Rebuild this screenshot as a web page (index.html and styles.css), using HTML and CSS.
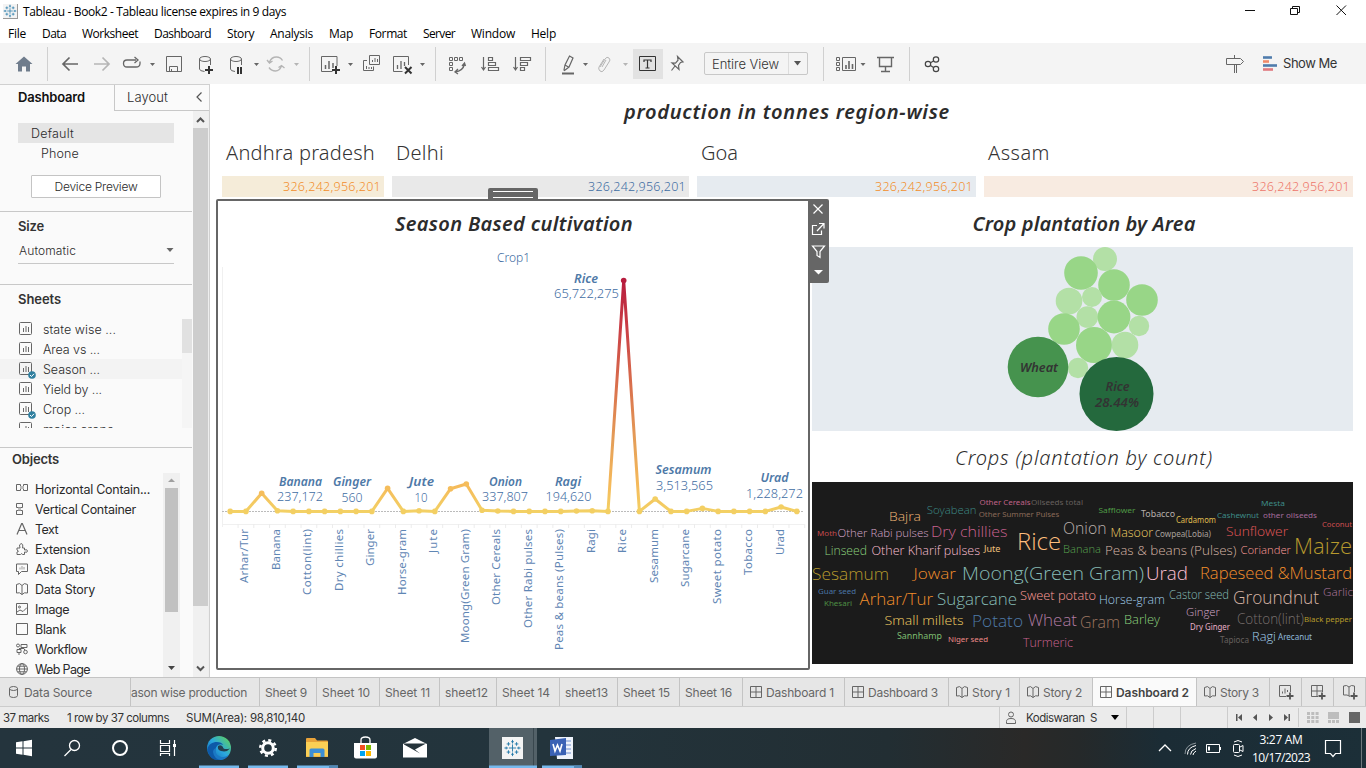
FILE: index.html
```html
<!DOCTYPE html>
<html lang="en">
<head>
<meta charset="utf-8">
<title>Tableau - Book2</title>
<link rel="stylesheet" href="styles.css">
</head>
<body>
<svg width="0" height="0" class="defs">
  <defs>
    <symbol id="sheet" viewBox="0 0 14 14"><rect x=".5" y=".5" width="12" height="12" rx="1" fill="none" stroke="#666"/><path d="M4.500 6v4M7 4v6M9.500 5v5" stroke="#666" fill="none"/></symbol>
    <symbol id="check" viewBox="0 0 8 8"><circle cx="4" cy="4" r="3.800" fill="#2f7f9f"/><path d="M2 4l1.500 1.500L6 2.800" stroke="#fff" fill="none"/></symbol>
    <symbol id="dash" viewBox="0 0 12 12"><path d="M.5.5h11v11H.5zM6 .5v11M.5 6h11" fill="none" stroke="#666"/></symbol>
    <symbol id="book" viewBox="0 0 12 12"><path d="M.5 1.500L3.500.6 6 2.500 8.500.6l3 .9v8.500l-3-.2L6 11.500 3.500 9.800l-3 .2zM6 2.500v9" fill="none" stroke="#666"/></symbol>
    <symbol id="tableau" viewBox="0 0 20 20"><path d="M10 6v8M6 10h8M10 1v4M8.500 3h3M10 15v4M8.500 17h3M1 10h4M3 8.500v3M15 10h4M17 8.500v3M5.500 3.500v4M3.500 5.500h4M14.500 3.500v4M12.500 5.500h4M5.500 12.500v4M3.500 14.500h4M14.500 12.500v4M12.500 14.500h4" fill="none" stroke="#1f77a8" stroke-width="1"/></symbol>
  </defs>
</svg>

<header class="titlebar">
  <span class="app-icon"><svg width="14" height="14"><use href="#tableau"/></svg></span>
  <span class="app-title" data-w="263">Tableau - Book2 - Tableau license expires in 9 days</span>
  <svg class="window-buttons" width="126" height="22" viewBox="1240 0 126 22" fill="none" stroke="#111"><path d="M1245 10.500h10M1290.500 8.500h7v6h-7zM1292.500 8.500v-2h7v6h-2M1336.500 5.500l9.500 9.500M1346 5.500l-9.500 9.500"/></svg>
</header>

<nav class="menubar">
  <span style="width:34px"><i data-w="18">File</i></span><span style="width:40px"><i data-w="24">Data</i></span><span style="width:72px"><i data-w="56">Worksheet</i></span><span style="width:73px"><i data-w="57">Dashboard</i></span><span style="width:43px"><i data-w="27">Story</i></span><span style="width:59px"><i data-w="43">Analysis</i></span><span style="width:40px"><i data-w="24">Map</i></span><span style="width:54px"><i data-w="38">Format</i></span><span style="width:48px"><i data-w="32">Server</i></span><span style="width:60px"><i data-w="44">Window</i></span><span data-w="25">Help</span>
</nav>

<div class="toolbar">
  <svg class="tools" width="435" height="41" viewBox="0 43 435 41" fill="none" stroke="#666">
    <path d="M24 56.500l8.500 7.500h-2.500v7.500h-4v-5h-4v5h-4v-7.500h-2.500z" fill="#6f7c8c" stroke="none"/>
    <path d="M47.500 47v34M309.500 47v34" stroke="#d0d0d0"/>
    <path d="M63 64h15M69.500 57.500L63 64l6.500 6.500" stroke-width="1.700"/>
    <path d="M94 64h15M102.500 57.500L109 64l-6.500 6.500" stroke="#b5b5b5" stroke-width="1.700"/>
    <path d="M136 60h-9q-3.500 0-3.500 3.500t3.500 3.500h9q4 0 4-3.500v-2M134.500 57l3.500 3-3.500 3" stroke-width="1.300"/>
    <path d="M166.500 56.500h15v15h-15zM169.500 71.500v-5h8v5M171.500 71v-2"/>
    <g><ellipse cx="205" cy="59" rx="5.500" ry="2.500"/><path d="M199.500 59v10q0 2 5 2.500M210.500 59v6"/><path d="M209 66v8M205 70h8" stroke="#333" stroke-width="2"/></g>
    <g><ellipse cx="236" cy="59" rx="5.500" ry="2.500"/><path d="M230.500 59v10q0 2 4.500 2.500M241.500 59v6"/><path d="M238 67v7M241 67v7" stroke="#333" stroke-width="2"/></g>
    <path d="M269.500 62q2-5 7-5 4 0 6 3.500M281.500 66q-2 5-6 5-4 0-6.500-3.500M267 60l2.500 3 3-2M284.500 68l-3-2.500-3 2" stroke="#b5b5b5" stroke-width="1.400"/>
    <g fill="#666" stroke="none"><path d="M150 63h5l-2.500 3zM254 63h5l-2.500 3zM348 63h5l-2.500 3zM420 63h5l-2.500 3z"/><path d="M294 63h5l-2.500 3z" fill="#b5b5b5"/></g>
    <path d="M337 66v-9.500h-15.500v15h11"/><path d="M325.500 65v4M329 61v8M333 63v5" stroke-width="1.500"/><path d="M336 66v8M332 70h8" stroke="#333" stroke-width="2"/>
    <path d="M369.500 55.500h10v9h-10zM372.500 62v-2M375 62v-4M377.500 62v-3M367 60.500h-3.500v10h10v-4M366.500 69v-3M369 69v-2M371.500 69v-2"/>
    <path d="M408.500 65v-8.500h-15v15h9" /><path d="M397.500 69v-4M401 69v-8M404.500 66v-4" stroke-width="1.300"/><path d="M405 67l6.500 6.500M411.500 67l-6.500 6.500" stroke="#333" stroke-width="2"/>
  </svg>
  <svg class="tools" width="269" height="41" viewBox="435 43 269 41" fill="none" stroke="#666">
    <path d="M435.500 47v34M545.500 47v34" stroke="#d0d0d0"/>
    <path d="M449.500 57.500h3v3h-3zM454.500 57.500h3v3h-3zM459.500 57.500h3v3h-3zM449.500 62.500h3v3h-3zM449.500 67.500h3v3h-3z"/><path d="M455 72q8-1 9.500-8M458 69l-3 3 3 2M462 66l2.500-3 1 3" stroke-width="1.300"/>
    <path d="M483.500 57v12M481.500 67l2 3 2-3M488.500 57.500h4v3h-4zM488.500 62.500h7v3h-7zM488.500 67.500h10v3h-10z" stroke-width="1.200"/>
    <path d="M515.500 57v12M513.500 67l2 3 2-3M520.500 57.500h10v3h-10zM520.500 62.500h7v3h-7zM520.500 67.500h4v3h-4z" stroke-width="1.200"/>
    <path d="M562 73.500h12" stroke-width="2"/><path d="M569.500 56l3.500 2-4 9-4.500 3.500-.5-.5 1-5zM565 65l3.800 2.200" stroke-width="1.200"/>
    <path d="M600 67l5-8q2-3 4-1t0 4l-5 8q-2 3-4 1t-1-4l5-8M602 67l4-7" stroke="#b5b5b5"/>
    <g fill="#666" stroke="none"><path d="M583 63h5l-2.500 3z"/><path d="M623 63h5l-2.500 3z" fill="#b5b5b5"/></g>
    <rect x="633" y="49" width="30" height="30" fill="#e2e2e2" stroke="none"/>
    <path d="M639.500 56.500h16v14h-16z" stroke="#333"/><path d="M644 62v-2h7v2M647.500 60v8M645.500 68h4" stroke="#333" stroke-width="1.200"/>
    <path d="M677.500 56.500l5.500 5.500-2.500.5-2 3 .5 4-7-6.500 3.500.2 2.500-3zM675 66l-3.500 4.500" stroke-width="1.200"/>
  </svg>
  <div class="view-select"><span data-w="67">Entire View</span><i><svg width="8" height="5"><path d="M0 0h7L3.500 4.500z" fill="#555"/></svg></i></div>
  <svg class="tools" width="140" height="41" viewBox="808 43 140 41" fill="none" stroke="#666">
    <path d="M823.500 47v34M909.500 47v34" stroke="#d0d0d0"/>
    <path d="M836.500 57.500h3v3h-3zM836.500 62.500h3v3h-3zM836.500 67.500h3v3h-3zM842.500 57.500h13v13h-13z"/><path d="M846 69v-4M849 69v-8M852.500 69v-5" stroke-width="1.600"/>
    <path d="M860.500 63h5l-2.500 3z" fill="#666" stroke="none"/>
    <path d="M877 57.500h17M879.500 58v8.500h12V58M885.500 67v4M881 71.500h9" stroke-width="1.400"/>
    <g stroke="#444" stroke-width="1.200"><circle cx="928" cy="64" r="2.700"/><circle cx="936" cy="59.500" r="2.700"/><circle cx="936" cy="69" r="2.700"/><path d="M930.500 62.700l3-1.800M930.500 65.500l3 2"/></g>
  </svg>
  <svg class="tools push" width="60" height="41" viewBox="1223 43 60 41" fill="none" stroke="#666">
    <path d="M1226.500 58.500h14l3 3-3 3h-14zM1234.500 55v3M1234.500 65v8M1236.500 65v8" />
    <g stroke-width="2.600"><path d="M1263 57.500h9" stroke="#4f7cac"/><path d="M1263 61.500h6" stroke="#ef8a6a"/><path d="M1263 65.500h14" stroke="#4f7cac"/><path d="M1263 69.500h10" stroke="#e07a80"/></g>
  </svg>
  <span class="show-me"><i data-w="54">Show Me</i></span>
</div>

<main class="workspace">
  <aside class="sidebar">
    <div class="side-tabs"><b><i data-w="67">Dashboard</i></b><span class="layout-tab"><span data-w="41">Layout</span><svg width="8" height="12"><path d="M6.500 1.500L2 6l4.500 4.500" fill="none" stroke="#555" stroke-width="1.200"/></svg></span></div>
    <div class="side-body">
      <div class="side-panels">
        <section class="devices">
          <div class="device on"><span data-w="43">Default</span></div>
          <div class="device sub"><span data-w="38">Phone</span></div>
          <button class="preview"><span data-w="83">Device Preview</span></button>
        </section>
        <section class="size">
          <h3><i data-w="26">Size</i></h3>
          <div class="combo"><span data-w="57">Automatic</span><svg width="8" height="5"><path d="M.5 0h7L4 4z" fill="#666"/></svg></div>
        </section>
        <section class="sheets">
          <h3><i data-w="43">Sheets</i></h3>
          <div class="sheet-scroller">
            <ul class="sheet-list">
              <li><svg width="14" height="14"><use href="#sheet"/></svg><span data-w="73">state wise ...</span></li>
              <li><svg width="14" height="14"><use href="#sheet"/></svg><span data-w="57">Area vs ...</span></li>
              <li class="on"><svg width="14" height="14"><use href="#sheet"/></svg><svg class="mark" width="8" height="8"><use href="#check"/></svg><span data-w="57">Season ...</span></li>
              <li><svg width="14" height="14"><use href="#sheet"/></svg><span data-w="59">Yield by ...</span></li>
              <li><svg width="14" height="14"><use href="#sheet"/></svg><svg class="mark" width="8" height="8"><use href="#check"/></svg><span data-w="42">Crop ...</span></li>
              <li><svg width="14" height="14"><use href="#sheet"/></svg><span data-w="71">major crops</span></li>
            </ul>
            <div class="mini-track"><div class="mini-thumb"></div></div>
          </div>
        </section>
        <section class="objects">
          <h3><i data-w="47">Objects</i></h3>
          <div class="object-scroller">
            <ul class="object-list">
              <li><svg width="12" height="12" viewBox="0 0 12 12"><path d="M.5 1.500h4v6h-4zM7.500 1.500h4v6h-4z"/><path d="M4 4.500h4" stroke="#bbb" stroke-width="3"/></svg><span data-w="115">Horizontal Contain...</span></li>
              <li><svg width="12" height="12" viewBox="0 0 12 12"><path d="M.5.5h6v4h-6zM.5 7.500h6v4h-6z"/><path d="M2 6h3" stroke="#bbb" stroke-width="3"/></svg><span data-w="101">Vertical Container</span></li>
              <li><svg width="12" height="12" viewBox="0 0 12 12"><path d="M1 11.500L5.700.5h.6L11 11.500M2.700 7.500h6.600" stroke-width="1.200"/></svg><span data-w="23">Text</span></li>
              <li><svg width="12" height="12" viewBox="0 0 12 12"><path d="M1 5h3Q2.500 1 5 .7T6.500 5h2v2q3-1 3 1t-3 1v2.500h-2q-.5-2-2 0H1V9q3-.5 0-2z"/></svg><span data-w="55">Extension</span></li>
              <li><svg width="12" height="12" viewBox="0 0 12 12"><path d="M.5 1h11v7.500h-6l-3 3v-3h-2z"/><path d="M4 6.500V4.500M6 6.500V3M8 6.500V4" stroke="#999"/></svg><span data-w="50">Ask Data</span></li>
              <li><svg width="12" height="12"><use href="#book"/></svg><span data-w="60">Data Story</span></li>
              <li><svg width="12" height="12" viewBox="0 0 12 12"><path d="M.5.5h11v11H.5zM1 9l3-2 3 1.500 4-4"/><circle cx="3.500" cy="4" r="1"/></svg><span data-w="34">Image</span></li>
              <li><svg width="12" height="12" viewBox="0 0 12 12"><path d="M.5.5h11v11H.5z"/></svg><span data-w="31">Blank</span></li>
              <li><svg width="12" height="12" viewBox="0 0 12 12"><circle cx="2" cy="2.500" r="1.500"/><path d="M5 1.500h6v3H5zM1 6.500h4v3H1zM3 5.500h5l1 2M3 10v2"/><circle cx="9.500" cy="9" r="1.800"/></svg><span data-w="52">Workflow</span></li>
              <li><svg width="12" height="12" viewBox="0 0 12 12"><circle cx="6" cy="6" r="5.400"/><ellipse cx="6" cy="6" rx="2.500" ry="5.400"/><path d="M.5 6h11M1.500 3.200h9M1.500 8.800h9"/></svg><span data-w="55">Web Page</span></li>
            </ul>
            <div class="obj-track"><svg width="17" height="15"><path d="M5 9h7L8.500 5.500z" fill="#a0a0a0"/></svg><div class="obj-thumb"></div><svg class="down" width="17" height="14"><path d="M5 5h7L8.500 9z" fill="#444"/></svg></div>
          </div>
        </section>
      </div>
      <div class="side-track"><svg width="15" height="17"><path d="M4 11l3.500-3.500L11 11" fill="none" stroke="#555" stroke-width="2"/></svg><div class="side-thumb"></div><svg class="down" width="15" height="17"><path d="M4 6.500L7.500 10 11 6.500" fill="none" stroke="#555" stroke-width="2"/></svg></div>
    </div>
  </aside>

  <div class="dashboard">
    <h1><span data-w="326">production in tonnes region-wise</span></h1>
    <div class="regions">
      <div class="region r1"><h2><span data-w="149">Andhra pradesh</span></h2><p><span data-w="98">326,242,956,201</span></p></div>
      <div class="region r2"><h2><span data-w="48">Delhi</span></h2><p><span data-w="98">326,242,956,201</span></p></div>
      <div class="region r3"><h2><span data-w="37">Goa</span></h2><p><span data-w="98">326,242,956,201</span></p></div>
      <div class="region r4"><h2><span data-w="62">Assam</span></h2><p><span data-w="98">326,242,956,201</span></p></div>
    </div>
    <div class="views">
      <section class="season">
        <div class="grip"></div>
        <h2><span data-w="238">Season Based cultivation</span></h2>
        <svg id="season-chart" width="590" height="424" viewBox="218 244 590 424"></svg>
        <svg class="view-tools" width="21" height="84" viewBox="808 199 21 84"><path d="M808 199h19q2 0 2 2v80q0 2-2 2h-17q-2 0-2-2z" fill="#666"/><g fill="none" stroke="#fff" stroke-width="1.200"><path d="M813.500 204.500l9 9M822.500 204.500l-9 9M817 225.500h-4.500v9h9v-4M819 223.500h5v5M824 223.500l-7 7.500M812.500 246h12l-4.500 5.500v6l-3-2v-4z"/></g><path d="M814 270h9l-4.500 4.500z" fill="#fff"/></svg>
      </section>
      <div class="right-views">
        <h2><span data-w="223">Crop plantation by Area</span></h2>
        <svg id="bubbles" width="541" height="184" viewBox="812 247 541 184"></svg>
        <h2 class="light"><span data-w="258">Crops (plantation by count)</span></h2>
        <svg id="cloud" width="541" height="182" viewBox="812 482 541 182"></svg>
      </div>
    </div>
  </div>
</main>

<nav class="tabs">
  <div class="source" style="width:131px"><svg width="9" height="12" viewBox="0 0 9 12"><path d="M.5 2.500v7q0 2 4 2t4-2v-7" fill="none" stroke="#666"/><ellipse cx="4.500" cy="2.500" rx="4" ry="2" fill="none" stroke="#666"/></svg><span data-w="68">Data Source</span></div>
  <div class="cut" style="width:129px"><span data-w="116">ason wise production</span></div>
  <div style="width:57px"><span data-w="42">Sheet 9</span></div>
  <div style="width:63px"><span data-w="48">Sheet 10</span></div>
  <div style="width:60px"><span data-w="45">Sheet 11</span></div>
  <div style="width:57px"><span data-w="43">sheet12</span></div>
  <div style="width:63px"><span data-w="48">Sheet 14</span></div>
  <div style="width:58px"><span data-w="43">sheet13</span></div>
  <div style="width:62px"><span data-w="47">Sheet 15</span></div>
  <div style="width:63px"><span data-w="47">Sheet 16</span></div>
  <div class="ic" style="width:102px"><svg width="12" height="12"><use href="#dash"/></svg><span data-w="68">Dashboard 1</span></div>
  <div class="ic" style="width:104px"><svg width="12" height="12"><use href="#dash"/></svg><span data-w="70">Dashboard 3</span></div>
  <div class="ic" style="width:71px"><svg width="12" height="12"><use href="#book"/></svg><span data-w="38">Story 1</span></div>
  <div class="ic" style="width:73px"><svg width="12" height="12"><use href="#book"/></svg><span data-w="39">Story 2</span></div>
  <div class="ic active" style="width:104px"><svg width="12" height="12"><use href="#dash"/></svg><span data-w="73">Dashboard 2</span></div>
  <div class="ic" style="width:73px"><svg width="12" height="12"><use href="#book"/></svg><span data-w="39">Story 3</span></div>
  <div class="add"><svg width="16" height="16" viewBox="0 0 16 16"><path d="M8 12.500H1.500v-11h11V8M4.500 9.500v-2M7 9.500v-5M9.500 8V6" fill="none" stroke="#666"/><path d="M12 8.500v7M8.500 12h7" stroke="#555" stroke-width="1.800"/></svg></div>
  <div class="add"><svg width="16" height="16" viewBox="0 0 16 16"><path d="M8 12.500H1.500v-11h11V8M7 1.500v11M1.500 7h11" fill="none" stroke="#666"/><path d="M12 8.500v7M8.500 12h7" stroke="#555" stroke-width="1.800"/></svg></div>
  <div class="add"><svg width="16" height="16" viewBox="0 0 16 16"><path d="M8 12.500L5 11H1.500V2l3-.5L7 3l2.500-1.500 3 .5v6M7 3v9" fill="none" stroke="#666"/><path d="M12 8.500v7M8.500 12h7" stroke="#555" stroke-width="1.800"/></svg></div>
</nav>

<footer class="status">
  <span class="st" style="width:64px"><i data-w="46">37 marks</i></span><span class="st" style="width:119px"><i data-w="102">1 row by 37 columns</i></span><span class="st"><i data-w="119">SUM(Area): 98,810,140</i></span>
  <div class="user"><svg width="10" height="14" viewBox="0 0 10 14" fill="none" stroke="#666"><circle cx="5" cy="3.500" r="2.500"/><path d="M.5 12.500v-2q0-3 4.500-3t4.500 3v2z"/></svg><span data-w="71">Kodiswaran&nbsp; S</span><svg class="caret" width="8" height="5"><path d="M0 0h8L4 5z"/></svg></div>
  <div class="cell c27"></div><div class="cell c27"></div><div class="cell c47"></div>
  <svg class="pager" width="138" height="21" viewBox="1228 707 138 21"><path d="M1298.500 708v19" stroke="#ccc"/><g fill="#555"><path d="M1236 714h1.500v7h-1.500zM1242 714v7l-4-3.500zM1257 714v7l-4-3.500zM1269 714v7l4-3.500zM1284 714v7l4-3.500zM1288.500 714h1.500v7h-1.500z"/><path d="M1307 712h3v3h-3zM1311.300 712h3v3h-3zM1315.600 712h3v3h-3zM1307 716h3v3h-3zM1311.300 716h3v3h-3zM1315.600 716h3v3h-3zM1307 720h3v3h-3zM1311.300 720h3v3h-3zM1315.600 720h3v3h-3zM1328 712h11v7h-11zM1328 720h3v3h-3zM1332 720h3v3h-3zM1336 720h3v3h-3z" fill="#bdbdbd"/><path d="M1349 712h11v11h-11z" fill="#666"/></g></svg>
</footer>

<footer class="taskbar">
  <svg width="600" height="40" viewBox="0 728 600 40">
    <defs><linearGradient id="edge1" x1="0" y1="1" x2="1" y2="0"><stop offset="0" stop-color="#0c59a4"/><stop offset=".5" stop-color="#2aa7e0"/><stop offset="1" stop-color="#66d84a"/></linearGradient></defs>
    <path d="M16 742.300l6.500-1v6.200H16zM23.500 741.200l8.500-1.400v7.700h-8.500zM16 748.500h6.500v6.200l-6.500-1zM23.500 748.500h8.500v7.700l-8.500-1.400z" fill="#fff"/>
    <g fill="none" stroke="#fff"><circle cx="74.500" cy="745.500" r="5" stroke-width="1.300"/><path d="M71 749.500l-6.500 6.500" stroke-width="1.300"/><circle cx="120" cy="748" r="7" stroke-width="2"/><path d="M160.500 740v3.500h9V740M160.500 756v-2.500h9v2.500M160.500 745.500h9v6h-9zM174.500 740v16" stroke-width="1.200"/><path d="M173 745.500h3" stroke-width="3"/></g>
    <circle cx="219" cy="748" r="12" fill="url(#edge1)"/><path d="M207.300 750q1-7 8-8 6-.5 8 3-5-2-7 2-3 6 2 10 2 1.500 4 2.500-12 3-15-9.500z" fill="#0d59a8"/><path d="M216 748q-2 6 4 8.500 5 1.500 8.500-1.500-2 4-7.500 5-7-1-8-8 0-3 3-4z" fill="#1b78c4"/><path d="M218 746q3-2 5 1 0 3 7 1.500-3 4-9 2.500-4-1-3-5z" fill="#24404f"/>
    <circle cx="268" cy="748" r="5.300" fill="none" stroke="#fff" stroke-width="3"/><circle cx="268" cy="748" r="7.700" fill="none" stroke="#fff" stroke-width="2.600" stroke-dasharray="3 3.050"/>
    <path d="M306 739q0-1 1-1h8l2 2.500h10q1 0 1 1V757h-22z" fill="#e8a33a"/><path d="M306 742h22v14.500h-22z" fill="#fbcf55"/><path d="M309.500 757v-7q0-1.500 1.500-1.500h12q1.500 0 1.500 1.500v7h-4v-4h-7v4z" fill="#3d8fd6"/>
    <path d="M354 743h23v13.500q0 2-2 2h-19q-2 0-2-2z" fill="#fff"/><path d="M361 743v-3q0-3 4.500-3t4.500 3v3" fill="none" stroke="#fff" stroke-width="1.300"/><path d="M360 745h5v5h-5z" fill="#f25022"/><path d="M366 745h5v5h-5z" fill="#7fba00"/><path d="M360 751h5v5h-5z" fill="#00a4ef"/><path d="M366 751h5v5h-5z" fill="#ffb900"/>
    <path d="M403 744l12-6 12 6v13.500h-24z" fill="#fff"/><path d="M404 743.500h22l-11 6 5 4-16-9z" fill="#26343b"/>
    <rect x="489" y="728" width="48" height="40" fill="#536168"/><path d="M533.500 728v40" stroke="#39474e"/><rect x="502" y="737" width="21" height="22" fill="#f4f4f4"/><use href="#tableau" x="503.500" y="739" width="18" height="18"/>
    <path d="M555 737h18v22h-16z" fill="#eef3fb"/><path d="M560 741h11M561 745h10M561 749h10M561 753h10" stroke="#6e8fd0"/><path d="M550 740l16-2v17l-16 1z" fill="#3a62b5"/><path d="M553 744l2 7 2.500-6 2.500 6 2-7" fill="none" stroke="#fff" stroke-width="1.600"/>
    <path d="M199 765.500h40v2.500h-40zM248 765.500h40v2.500h-40zM297 765.500h41v2.500h-41zM489 765.500h48v2.500h-48zM542 765.500h40v2.500h-40z" fill="#76b9ed"/><path d="M329 765.500h9v2.500h-9zM574 765.500h8v2.500h-8z" fill="#5288b5"/>
  </svg>
  <svg class="tray" width="96" height="40" viewBox="1155 728 96 40" fill="none" stroke="#fff">
    <path d="M1159 751l6-6 6 6" stroke-width="1.300"/><path d="M1185 754q0-9 11-11" stroke="#8a949a"/><path d="M1187.500 754.500q0-7 8.500-9M1190.500 754.500q0-4 5.500-6M1193 755q0-2 3-4"/><path d="M1206.500 744.500h13v8h-13zM1220.500 747v3"/><path d="M1209 746.500v4" stroke-width="2"/><rect x="1233.500" y="744.500" width="6" height="8" rx="1"/><path d="M1240 747l3-1.500v6l-3-1.500M1234 742q4-3 8 0M1234 755q4 3 8 0"/>
  </svg>
  <div class="clock"><span data-w="43">3:27 AM</span><span data-w="58">10/17/2023</span></div>
  <svg width="55" height="40" viewBox="1311 728 55 40" fill="none" stroke="#fff"><path d="M1325.500 740.500h15v13h-5l-2.500 3-2.500-3h-5z" stroke-width="1.200"/><path d="M1361.500 728v40" stroke="#6d787d"/></svg>
</footer>
<script src="app.js"></script>
</body>
</html>
```
FILE: styles.css
```css
* { box-sizing: border-box; margin: 0; padding: 0; }
body { width: 1366px; height: 768px; overflow: hidden; display: flex; flex-direction: column; background: #fff; font-family: "Open Sans", "Noto Sans", sans-serif; font-size: 12px; color: #000; }
.defs { position: absolute; }
svg { display: block; flex: none; }
i { font-style: normal; }
ul { list-style: none; }
span, i, b, h3 { white-space: pre; }
[data-w] { display: inline-block; }

.titlebar { height: 22px; flex: none; display: flex; align-items: center; padding-left: 3px; }
.app-icon { width: 15px; height: 15px; background: #f3f3f3; border-right: 1px solid #999; border-bottom: 1px solid #999; margin-right: 5px; margin-top: 1px; }
.app-title { padding-top: 1px; }
.window-buttons { margin-left: auto; }
.menubar { height: 21px; flex: none; display: flex; padding-left: 8px; line-height: 23px; }
.menubar span { flex: none; }

.toolbar { height: 41px; flex: none; display: flex; align-items: center; background: #f4f4f4; font-family: Inter, sans-serif; font-weight: 400; color: #333; }
.view-select { width: 104px; height: 23px; border: 1px solid #c8c8c8; border-radius: 2px; display: flex; align-items: center; justify-content: space-between; padding-left: 7px; font-size: 13px; font-weight: 300; color: #333; }
.view-select i { width: 19px; height: 21px; border-left: 1px solid #ddd; display: flex; align-items: center; justify-content: center; }
.push { margin-left: auto; }
.show-me { width: 83px; font-size: 13px; padding-bottom: 1px; }

.workspace { flex: 1; min-height: 0; display: flex; }
.sidebar { width: 210px; flex: none; display: flex; flex-direction: column; background: #fafafa; border-top: 1px solid #d0d0d0; border-right: 1px solid #d0d0d0; font-family: Inter, sans-serif; font-weight: 300; font-size: 12.5px; color: #2a2a2a; }
.side-tabs { height: 26px; flex: none; display: flex; align-items: center; padding-left: 18px; font-size: 13px; }
.side-tabs b { width: 96px; font-weight: 600; color: #111; padding-bottom: 2px; }
.layout-tab { flex: 1; height: 26px; border-left: 1px solid #c8c8c8; border-bottom: 1px solid #c8c8c8; display: flex; align-items: center; justify-content: space-between; padding: 0 6px 1px 12px; }
.side-body { flex: 1; min-height: 0; display: flex; justify-content: space-between; }
.side-panels { width: 192px; display: flex; flex-direction: column; overflow: hidden; }
.side-panels h3 { font-size: 13px; font-weight: 600; color: #333; line-height: 16px; }
.devices { height: 101px; flex: none; padding: 12px 18px 0; border-bottom: 1px solid #c8c8c8; }
.device { height: 20px; line-height: 21px; padding-left: 13px; }
.device.on { background: #e5e5e5; }
.device.sub { padding-left: 23px; }
.preview { display: block; width: 130px; height: 23px; margin: 12px 0 0 13px; padding-bottom: 1px; background: #fff; border: 1px solid #c4c4c4; border-radius: 1px; font: 300 12px Inter, sans-serif; color: #2a2a2a; }
.size { height: 73px; flex: none; padding: 6px 18px 0; border-bottom: 1px solid #c8c8c8; }
.combo { height: 24px; margin-top: 6px; padding-left: 1px; display: flex; align-items: center; justify-content: space-between; border-bottom: 1px solid #c8c8c8; font-size: 12px; padding-bottom: 2px; }
.sheets { height: 163px; flex: none; padding: 6px 0 0; border-bottom: 1px solid #c8c8c8; }
.sheets h3 { margin-left: 18px; }
.sheet-scroller { height: 109px; margin-top: 12px; display: flex; overflow: hidden; }
.sheet-list { width: 182px; }
.sheet-list li { position: relative; height: 20px; display: flex; align-items: center; padding-left: 19px; gap: 10px; }
.sheet-list li > svg:first-child { margin-top: -1px; }
.sheet-list li.on { background: #f3f3f3; }
.mark { position: absolute; left: 28px; top: 12px; }
.mini-track { width: 10px; background: #f5f5f5; }
.mini-thumb { height: 34px; background: #e1e1e1; }
.objects { flex: 1; min-height: 0; padding-top: 3px; display: flex; flex-direction: column; }
.objects h3 { margin-left: 12px; flex: none; }
.object-scroller { flex: 1; min-height: 0; display: flex; margin-top: 6px; }
.object-list { width: 163px; padding-top: 6px; font-weight: 400; }
.object-list li { height: 20px; display: flex; align-items: center; padding-left: 16px; gap: 7px; }
.object-list svg { fill: none; stroke: #666; }
.obj-track { width: 17px; background: #f0f0f0; display: flex; flex-direction: column; align-items: center; padding-bottom: 2px; }
.obj-thumb { width: 13px; height: 124px; background: #c1c1c1; }
.down { margin-top: auto; }
.side-track { width: 16px; background: #f0f0f0; display: flex; flex-direction: column; border-right: 1px solid #eee; }
.side-thumb { height: 478px; width: 15px; background: #cdcdcd; }

.dashboard { flex: 1; min-width: 0; display: flex; flex-direction: column; font-family: "Open Sans", sans-serif; color: #333; }
.dashboard h1, .season h2, .right-views h2 { font-family: "Noto Sans", "Open Sans", sans-serif; font-size: 20px; font-style: italic; font-weight: 600; text-align: center; color: #2c2c2c; }
.dashboard h1 { height: 54px; line-height: 55px; padding-right: 2px; }
.regions { display: flex; gap: 8px; padding-left: 12px; height: 61px; flex: none; }
.region h2 { height: 38px; line-height: 29px; font-family: "Noto Sans", "Open Sans", sans-serif; font-size: 20px; font-weight: 300; padding-left: 4px; }
.region p { height: 21px; line-height: 21px; text-align: right; padding-right: 3px; font-family: "Noto Sans", "Open Sans", sans-serif; font-size: 12.5px; font-weight: 300; }
.r1 { width: 162px; } .r1 p { background: #f5ecd9; color: #f28e2b; }
.r2 { width: 297px; } .r2 p { background: #e9e9e9; color: #3f6da3; }
.r3 { width: 279px; } .r3 p { background: #e6ebf0; color: #f28e2b; }
.r4 { width: 369px; } .r4 p { background: #f8ebe1; color: #ee756a; }
.views { display: flex; padding-left: 6px; flex: 1; min-height: 0; }
.season { position: relative; width: 594px; height: 471px; border: 2px solid #666; border-radius: 2px; margin-right: 2px; }
.season h2 { height: 43px; line-height: 46px; padding-left: 2px; }
.grip { position: absolute; left: 270px; top: -13px; width: 50px; height: 12px; background: #666; border-radius: 2px 2px 0 0; }
.grip::before { content: ""; position: absolute; left: 5px; right: 5px; top: 3px; height: 5px; border: solid #fff; border-width: 1px 0; }
.view-tools { position: absolute; left: 590px; top: -2px; z-index: 2; }
.right-views { width: 541px; }
.right-views h2 { height: 48px; line-height: 50px; padding-left: 3px; }
.right-views h2.light { height: 51px; line-height: 54px; font-weight: 300; }

.tabs { height: 30px; flex: none; display: flex; background: #e6e6e6; border-top: 1px solid #c4c4c4; border-bottom: 1px solid #ccc; font-family: Inter, sans-serif; font-size: 12px; font-weight: 400; color: #666; }
.tabs > div { flex: none; display: flex; align-items: center; border-right: 1px solid #c4c4c4; padding-left: 5px; }
.tabs .source { padding-left: 9px; gap: 6px; }
.tabs .cut { padding-left: 0; }
.tabs .ic { padding-left: 7px; gap: 4px; }
.tabs .active { background: #fafafa; font-weight: 600; color: #444; }
.tabs .add { width: 32px; padding-left: 8px; }
.status { height: 21px; flex: none; display: flex; align-items: center; background: #ebebeb; padding-left: 3px; font-family: Inter, sans-serif; font-size: 11.5px; color: #333; }
.user { margin-left: auto; width: 128px; height: 21px; display: flex; align-items: center; border: solid #ccc; border-width: 0 1px; padding-left: 6px; gap: 10px; }
.caret { margin-left: 4px; }
.cell { height: 21px; border-right: 1px solid #ccc; }
.c27 { width: 27px; }
.c47 { width: 47px; }
.taskbar { height: 40px; flex: none; display: flex; background: linear-gradient(90deg, #24343d, #23343c 40%, #222e33 65%, #2a2928 75%, #25292a 79%, #1b2c35 85%, #1c2f38); color: #fff; }
.tray { margin-left: auto; }
.clock { width: 60px; display: flex; flex-direction: column; align-items: center; justify-content: center; line-height: 18px; padding-top: 1px; font-size: 12px; }
```
FILE: app.js
```javascript
// Sets the tracking of a label so that it fills its slot width.
document.querySelectorAll('[data-w]').forEach(el => {
  const range = document.createRange();
  range.selectNodeContents(el);
  const natural = range.getBoundingClientRect().width;
  const spacing = (Number(el.dataset.w) - natural) / el.textContent.length;
  el.style.letterSpacing = spacing.toFixed(3) + 'px';
});

const NS = 'http://www.w3.org/2000/svg';
function add(parent, tag, attrs, text) {
  const el = document.createElementNS(NS, tag);
  for (const k in attrs) el.setAttribute(k, attrs[k]);
  if (text) el.textContent = text;
  parent.appendChild(el);
  return el;
}
const FONT = '"Noto Sans", "Open Sans", sans-serif';
const LIGHT = '"Open Sans", "Noto Sans", sans-serif';

// Season chart
const chart = document.getElementById('season-chart');
const grad = add(add(chart, 'defs', {}), 'linearGradient', { id: 'heat', gradientUnits: 'userSpaceOnUse', x1: 0, y1: 512, x2: 0, y2: 280 });
[[0, '#f3d165'], [0.12, '#f5b95a'], [0.3, '#e59f58'], [0.55, '#d96f4c'], [0.8, '#c93d45'], [1, '#b71d3e']]
  .forEach(([o, c]) => add(grad, 'stop', { offset: o, 'stop-color': c }));
const STEP = 15.74, X0 = 230.2;
const ys = Array(37).fill(511.4);
Object.assign(ys, { 2: 493.3, 3: 510.7, 10: 488.3, 12: 510.8, 14: 488.7, 15: 484, 16: 510.2, 17: 511, 22: 511, 23: 510.8, 25: 280.5, 27: 499, 30: 508.4, 35: 507 });
add(chart, 'path', { d: 'M222.500 267V527M222 524.500H804', stroke: '#f0f0f0', fill: 'none' });
for (let i = 0; i < 37; i++) add(chart, 'path', { d: `M${X0 + (i + 0.5) * STEP} 524v4`, stroke: '#ececec' });
add(chart, 'path', { d: 'M222 511.500H804', stroke: '#bbb', 'stroke-dasharray': '2 1' });
add(chart, 'path', { d: 'M' + ys.map((y, i) => `${(X0 + i * STEP).toFixed(1)} ${y}`).join('L'), fill: 'none', stroke: 'url(#heat)', 'stroke-width': 3, 'stroke-linejoin': 'round' });
ys.forEach((y, i) => add(chart, 'circle', { cx: X0 + i * STEP, cy: y, r: 2.8, fill: y < 300 ? '#b71d3e' : y < 495 ? '#f5bd5b' : '#f3cf63' }));

[['Arhar/Tur', 54], ['Banana', 41], ['Cotton(lint)', 66], ['Dry chillies', 62], ['Ginger', 37], ['Horse-gram', 66], ['Jute', 24], ['Moong(Green Gram)', 114], ['Other Cereals', 76], ['Other Rabi pulses', 99], ['Peas & beans (Pulses)', 121], ['Ragi', 24], ['Rice', 24], ['Sesamum', 54], ['Sugarcane', 58], ['Sweet potato', 75], ['Tobacco', 46], ['Urad', 26]]
  .forEach(([t, w], i) => {
    const x = X0 + (2 * i + 1) * STEP + 2.5;
    add(chart, 'text', { transform: `translate(${x} ${529 + w}) rotate(-90)`, textLength: w, 'font-family': FONT, 'font-size': 11.5, fill: '#5f86b4' }, t);
  });

function label(name, cx, y, w, value, vcx, vw) {
  add(chart, 'text', { x: cx - w / 2, y, textLength: w, lengthAdjust: 'spacingAndGlyphs', 'font-family': FONT, 'font-size': 12.5, 'font-weight': 600, 'font-style': 'italic', fill: '#4e79a7' }, name);
  add(chart, 'text', { x: vcx - vw / 2, y: y + 15.5, textLength: vw, lengthAdjust: 'spacingAndGlyphs', 'font-family': FONT, 'font-size': 12.5, 'font-weight': 300, fill: '#3f6da3' }, value);
}
label('Banana', 300.5, 485.5, 43, '237,172', 300, 46);
label('Ginger', 352, 486, 38, '560', 352, 21);
label('Jute', 421.5, 486, 25, '10', 421, 13);
label('Onion', 505.5, 485.5, 33, '337,807', 505, 46);
label('Ragi', 568, 485.5, 26, '194,620', 568.5, 46);
label('Sesamum', 683.5, 474, 56, '3,513,565', 684.5, 57);
label('Urad', 774.5, 482, 28, '1,228,272', 774.5, 57);
label('Rice', 586, 282.5, 24, '65,722,275', 586.5, 65);
add(chart, 'text', { x: 497, y: 262, textLength: 33, 'font-family': FONT, 'font-size': 12, 'font-weight': 300, fill: '#3f6da3' }, 'Crop1');

// Packed bubbles
const bubbles = document.getElementById('bubbles');
add(bubbles, 'rect', { x: 812, y: 247, width: 541, height: 184, fill: '#e6ebf0' });
[[1105, 259, 12, 1], [1081, 273, 16.8, 2], [1114, 285, 15.8, 2], [1142, 300, 15.8, 2], [1069, 301, 13.3, 1], [1092, 297, 10, 1], [1087.3, 317, 10.8, 1], [1114, 317, 16.4, 2], [1064, 329, 15.8, 2], [1139, 326, 10.2, 1], [1094, 345, 18, 2], [1125, 345, 13.3, 1], [1078, 368, 10.2, 1], [1038, 367, 30.3, 3], [1116.5, 394, 37, 4]]
  .forEach(([cx, cy, r, c]) => add(bubbles, 'circle', { cx, cy, r, fill: ['', '#b3e0a6', '#98d687', '#46934e', '#24693d'][c] }));
[['Wheat', 1020, 372, 38], ['Rice', 1105.5, 391, 24], ['28.44%', 1095, 407, 44]]
  .forEach(([t, x, y, w]) => add(bubbles, 'text', { x, y, textLength: w, lengthAdjust: 'spacingAndGlyphs', 'font-family': FONT, 'font-size': 12.5, 'font-weight': 600, 'font-style': 'italic', fill: '#333' }, t));

// Word cloud: text, left, right, baseline, size, colour
const cloud = document.getElementById('cloud');
add(cloud, 'rect', { x: 812, y: 482, width: 541, height: 182, fill: '#1b1b1b' });
[
  ['Bajra', 889, 921, 520.5, 13, '#f1b576'], ['Soyabean', 926.7, 976.5, 514, 11, '#3d8a86'],
  ['Other Cereals', 979.5, 1030.5, 505, 7.5, '#c06287'], ['Oilseeds total', 1031, 1083, 505, 7.5, '#66605e'],
  ['Other Summer Pulses', 978.7, 1059.3, 517, 7.5, '#8a6a58'], ['Moth', 817, 837, 536, 7.5, '#c24a4d'],
  ['Other Rabi pulses', 837.5, 928.5, 537, 11.5, '#d4a6c8'], ['Dry chillies', 931, 1007.5, 537, 15, '#c96290'],
  ['Rice', 1017, 1061, 550, 23, '#ffbe7d'], ['Onion', 1063, 1106.5, 533.5, 16, '#bab0ac'],
  ['Masoor', 1110.5, 1153, 537, 12.5, '#f1ce63'], ['Linseed', 824.5, 867, 555, 12, '#8cd17d'],
  ['Other Kharif pulses', 871.5, 980, 555, 12, '#fabfd2'], ['Jute', 984, 1000.5, 552, 8, '#f1c07b'],
  ['Banana', 1063, 1101, 553, 11, '#59a14f'], ['Peas & beans (Pulses)', 1105, 1236.5, 555, 13, '#d7b5a6'],
  ['Coriander', 1240.5, 1291, 554, 11, '#ff9d9a'], ['Maize', 1294, 1352, 554, 22, '#b6992d'],
  ['Sesamum', 812, 889, 580, 17, '#b6992d'], ['Jowar', 913.5, 956, 579, 15, '#f28e2b'],
  ['Moong(Green Gram)', 962, 1144, 580, 19, '#86bcb6'], ['Urad', 1146, 1188, 580, 18.5, '#fabfd2'],
  ['Rapeseed &Mustard', 1200, 1352, 579, 16.5, '#f28e2b'], ['Guar seed', 818, 856, 594, 7.5, '#4a74a4'],
  ['Khesari', 824, 852, 606, 7.5, '#4e8f45'], ['Arhar/Tur', 859.5, 933, 605, 17, '#f28e2b'],
  ['Sugarcane', 937, 1017, 604.5, 17, '#86bcb6'], ['Sweet potato', 1020, 1096, 600, 12, '#ff9d9a'],
  ['Horse-gram', 1099, 1165, 603.5, 12, '#a0cbe8'], ['Castor seed', 1169, 1229, 599, 12, '#86bcb6'],
  ['Groundnut', 1233, 1319, 604, 18, '#d7b5a6'], ['Garlic', 1323, 1353, 596, 11, '#b07aa1'],
  ['Small millets', 884.5, 963.5, 625, 13.5, '#f1ce63'], ['Potato', 972, 1023, 627, 17, '#4e79a7'],
  ['Wheat', 1028, 1077, 625.5, 17, '#b07aa1'], ['Gram', 1080, 1120, 628, 17, '#9d7660'],
  ['Barley', 1124, 1160, 624, 12.5, '#8cd17d'], ['Ginger', 1186, 1220, 616, 11.5, '#d4a6c8'],
  ['Cotton(lint)', 1237, 1304, 623.5, 14, '#79706e'], ['Black pepper', 1304, 1352, 622, 7.5, '#b59a2a'],
  ['Sannhamp', 897, 942, 639, 9, '#7dbb70'], ['Niger seed', 948, 988, 642, 7.5, '#ee8a88'],
  ['Turmeric', 1023, 1073, 647, 12, '#c96290'], ['Dry Ginger', 1190, 1230, 630, 8, '#e8b0c8'],
  ['Tapioca', 1220, 1249, 643, 8, '#66605e'], ['Ragi', 1252, 1276, 641, 13, '#a0cbe8'],
  ['Arecanut', 1278, 1312, 640, 8, '#8fbadb'], ['Safflower', 1098.5, 1135.5, 513, 7.5, '#4e9a45'],
  ['Tobacco', 1141, 1175, 517, 8.5, '#b8b0ac'], ['Cardamom', 1176, 1216, 523, 8, '#e0bf50'],
  ['Cashewnut', 1217, 1259, 518, 7.5, '#3d8a86'], ['Mesta', 1261, 1285, 506, 7.5, '#3d8a86'],
  ['other oilseeds', 1263, 1317, 518, 7.5, '#a56c9c'], ['Coconut', 1322, 1352, 527, 7.5, '#cf4d50'],
  ['Cowpea(Lobia)', 1155, 1211, 537, 8, '#aaa19c'], ['Sunflower', 1226, 1288, 536, 13, '#e15759']
].forEach(([t, x, r, y, s, fill]) => add(cloud, 'text', { x, y, textLength: r - x, lengthAdjust: 'spacingAndGlyphs', 'font-family': s > 10 ? LIGHT : FONT, 'font-weight': s > 10 ? 300 : 400, 'font-size': s, fill }, t));
```
